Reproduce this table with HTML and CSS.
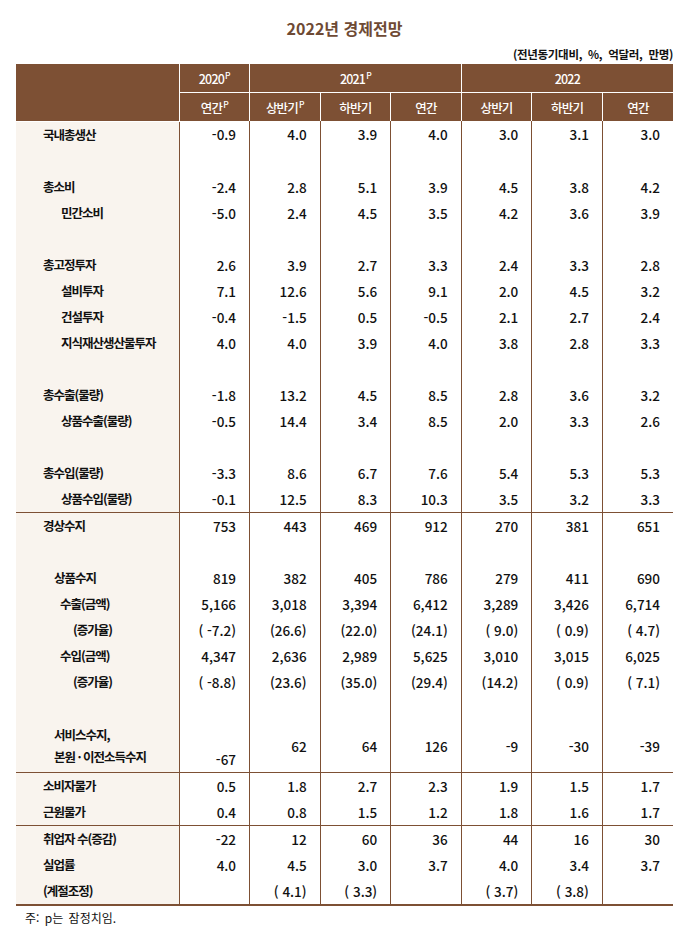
FILE: index.html
```html
<!DOCTYPE html>
<html lang="ko">
<head>
<meta charset="utf-8">
<title>2022년 경제전망</title>
<link rel="stylesheet" href="styles.css">
</head>
<body>
<div class="page">
  <h1 class="title">2022년 경제전망</h1>
  <p class="unit">(전년동기대비, %, 억달러, 만명)</p>
  <table class="outlook">
    <colgroup>
      <col class="col-label">
      <col><col><col><col><col><col><col>
    </colgroup>
    <thead>
      <tr class="head-top">
        <th rowspan="2"></th>
        <th>2020<sup>P</sup></th>
        <th colspan="3">2021<sup>P</sup></th>
        <th colspan="3">2022</th>
      </tr>
      <tr class="head-sub">
        <th>연간<sup>P</sup></th>
        <th>상반기<sup>P</sup></th>
        <th>하반기</th>
        <th>연간</th>
        <th>상반기</th>
        <th>하반기</th>
        <th>연간</th>
      </tr>
    </thead>
    <tbody>
      <tr><td class="lbl l0">국내총생산</td><td>-0.9</td><td>4.0</td><td>3.9</td><td>4.0</td><td>3.0</td><td>3.1</td><td>3.0</td></tr>
      <tr><td class="lbl"></td><td></td><td></td><td></td><td></td><td></td><td></td><td></td></tr>
      <tr><td class="lbl l0">총소비</td><td>-2.4</td><td>2.8</td><td>5.1</td><td>3.9</td><td>4.5</td><td>3.8</td><td>4.2</td></tr>
      <tr><td class="lbl l1">민간소비</td><td>-5.0</td><td>2.4</td><td>4.5</td><td>3.5</td><td>4.2</td><td>3.6</td><td>3.9</td></tr>
      <tr><td class="lbl"></td><td></td><td></td><td></td><td></td><td></td><td></td><td></td></tr>
      <tr><td class="lbl l0">총고정투자</td><td>2.6</td><td>3.9</td><td>2.7</td><td>3.3</td><td>2.4</td><td>3.3</td><td>2.8</td></tr>
      <tr><td class="lbl l1">설비투자</td><td>7.1</td><td>12.6</td><td>5.6</td><td>9.1</td><td>2.0</td><td>4.5</td><td>3.2</td></tr>
      <tr><td class="lbl l1">건설투자</td><td>-0.4</td><td>-1.5</td><td>0.5</td><td>-0.5</td><td>2.1</td><td>2.7</td><td>2.4</td></tr>
      <tr><td class="lbl l1">지식재산생산물투자</td><td>4.0</td><td>4.0</td><td>3.9</td><td>4.0</td><td>3.8</td><td>2.8</td><td>3.3</td></tr>
      <tr><td class="lbl"></td><td></td><td></td><td></td><td></td><td></td><td></td><td></td></tr>
      <tr><td class="lbl l0">총수출(물량)</td><td>-1.8</td><td>13.2</td><td>4.5</td><td>8.5</td><td>2.8</td><td>3.6</td><td>3.2</td></tr>
      <tr><td class="lbl l1">상품수출(물량)</td><td>-0.5</td><td>14.4</td><td>3.4</td><td>8.5</td><td>2.0</td><td>3.3</td><td>2.6</td></tr>
      <tr><td class="lbl"></td><td></td><td></td><td></td><td></td><td></td><td></td><td></td></tr>
      <tr><td class="lbl l0">총수입(물량)</td><td>-3.3</td><td>8.6</td><td>6.7</td><td>7.6</td><td>5.4</td><td>5.3</td><td>5.3</td></tr>
      <tr><td class="lbl l1">상품수입(물량)</td><td>-0.1</td><td>12.5</td><td>8.3</td><td>10.3</td><td>3.5</td><td>3.2</td><td>3.3</td></tr>

      <tr class="sec"><td class="lbl l0">경상수지</td><td>753</td><td>443</td><td>469</td><td>912</td><td>270</td><td>381</td><td>651</td></tr>
      <tr><td class="lbl"></td><td></td><td></td><td></td><td></td><td></td><td></td><td></td></tr>
      <tr><td class="lbl l2">상품수지</td><td>819</td><td>382</td><td>405</td><td>786</td><td>279</td><td>411</td><td>690</td></tr>
      <tr><td class="lbl l3">수출(금액)</td><td>5,166</td><td>3,018</td><td>3,394</td><td>6,412</td><td>3,289</td><td>3,426</td><td>6,714</td></tr>
      <tr><td class="lbl l4">(증가율)</td><td>( -7.2)</td><td>(26.6)</td><td>(22.0)</td><td>(24.1)</td><td>( 9.0)</td><td>( 0.9)</td><td>( 4.7)</td></tr>
      <tr><td class="lbl l3">수입(금액)</td><td>4,347</td><td>2,636</td><td>2,989</td><td>5,625</td><td>3,010</td><td>3,015</td><td>6,025</td></tr>
      <tr><td class="lbl l4">(증가율)</td><td>( -8.8)</td><td>(23.6)</td><td>(35.0)</td><td>(29.4)</td><td>(14.2)</td><td>( 0.9)</td><td>( 7.1)</td></tr>
      <tr><td class="lbl"></td><td></td><td></td><td></td><td></td><td></td><td></td><td></td></tr>
      <tr class="tall">
        <td class="lbl l2 two-line" rowspan="2"><span class="line">서비스수지,</span><span class="line">본원 · 이전소득수지</span></td>
        <td class="low" rowspan="2">-67</td>
        <td rowspan="2">62</td><td rowspan="2">64</td><td rowspan="2">126</td><td rowspan="2">-9</td><td rowspan="2">-30</td><td rowspan="2">-39</td>
      </tr>
      <tr class="tall"></tr>

      <tr class="sec"><td class="lbl l0">소비자물가</td><td>0.5</td><td>1.8</td><td>2.7</td><td>2.3</td><td>1.9</td><td>1.5</td><td>1.7</td></tr>
      <tr><td class="lbl l0">근원물가</td><td>0.4</td><td>0.8</td><td>1.5</td><td>1.2</td><td>1.8</td><td>1.6</td><td>1.7</td></tr>

      <tr class="sec"><td class="lbl l0">취업자 수(증감)</td><td>-22</td><td>12</td><td>60</td><td>36</td><td>44</td><td>16</td><td>30</td></tr>
      <tr><td class="lbl l0">실업률</td><td>4.0</td><td>4.5</td><td>3.0</td><td>3.7</td><td>4.0</td><td>3.4</td><td>3.7</td></tr>
      <tr class="last"><td class="lbl l0">(계절조정)</td><td></td><td>( 4.1)</td><td>( 3.3)</td><td></td><td>( 3.7)</td><td>( 3.8)</td><td></td></tr>
    </tbody>
  </table>
  <p class="note">주: p는 잠정치임.</p>
</div>
</body>
</html>
```

FILE: styles.css
```css
html, body {
  margin: 0;
  padding: 0;
  background: #ffffff;
}

body {
  font-family: "Noto Sans CJK KR", "Noto Sans", sans-serif;
  color: #111111;
}

.page {
  padding: 17px 16px 0 16px;
}

.title {
  margin: 0;
  font-size: 16px;
  line-height: 22px;
  font-weight: 700;
  color: #6e4a34;
  text-align: center;
}

.unit {
  margin: 7px 0 2px 0;
  font-size: 11.5px;
  line-height: 16px;
  font-weight: 700;
  text-align: right;
  word-spacing: 3px;
  letter-spacing: -0.3px;
}

.outlook {
  width: 657px;
  border-collapse: collapse;
  table-layout: fixed;
}

.col-label {
  width: 163px;
}

.outlook th {
  background: #7d5034;
  color: #ffffff;
  font-weight: 500;
  font-size: 12.5px;
  letter-spacing: -0.8px;
  padding: 0;
  text-align: center;
  border: 1px solid #ffffff;
}

.outlook thead tr th:first-child {
  border-left: none;
}

.outlook thead tr th:last-child {
  border-right: none;
}

.outlook thead tr.head-top th {
  border-top: none;
  height: 28px;
}

.outlook thead tr.head-sub th {
  height: 28px;
  border-bottom: none;
}

.outlook sup {
  font-size: 8.5px;
  line-height: 0;
  vertical-align: 5px;
  margin-left: 1px;
}

.outlook td {
  height: 26px;
  padding: 0 13px 0 0;
  font-size: 13.5px;
  font-weight: 500;
  line-height: 18px;
  text-align: right;
  white-space: pre;
  border-left: 1px solid #7d5034;
  vertical-align: middle;
}

.outlook td.lbl {
  border-left: none;
  background: #f9f4ee;
  text-align: left;
  font-weight: 700;
  font-size: 12.5px;
  letter-spacing: -1px;
  padding-right: 0;
}

.outlook td.l0 { padding-left: 27px; }
.outlook td.l1 { padding-left: 45px; }
.outlook td.l2 { padding-left: 38px; }
.outlook td.l3 { padding-left: 44px; }
.outlook td.l4 { padding-left: 57px; }

.outlook tr.sec td {
  border-top: 1px solid #7d5034;
}

.outlook tr.last td {
  border-bottom: 2px solid #7d5034;
}

.outlook tr.tall {
  height: 26px;
}

.outlook td.two-line {
  line-height: 22px;
}

.outlook td.two-line .line {
  display: block;
}

.outlook td.low {
  vertical-align: bottom;
  padding-bottom: 4px;
}

.note {
  margin: 3px 0 0 9px;
  font-size: 12px;
  line-height: 18px;
  font-weight: 400;
  word-spacing: 2px;
}
```
